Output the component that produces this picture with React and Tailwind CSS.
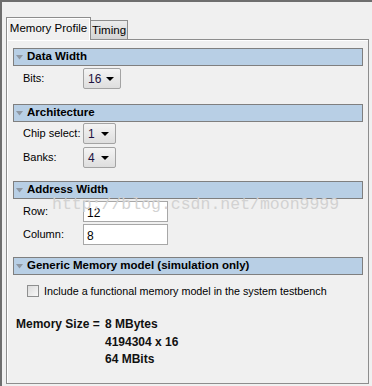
import React from "react";

const font = { fontFamily: '"Liberation Sans", Arial, sans-serif' };

function Header({ title }) {
  return (
    <div className="flex h-[18px] items-center border border-[#7f7f7f] bg-[#b8cfe5]">
      <svg width="7" height="5" viewBox="0 0 7 5" className="ml-[2px] mr-[4px]">
        <path d="M0 0 L7 0 L3.5 4.5 Z" fill="#8e97a2" />
      </svg>
      <span className="text-[11.5px] font-bold leading-none text-black">{title}</span>
    </div>
  );
}

function Dropdown({ value, width }) {
  return (
    <div
      className="flex h-[21px] items-center justify-between rounded-[2px] border border-[#a3a3a3] bg-gradient-to-b from-[#f4f4f4] to-[#dedede] pl-[4px] pr-[6px]"
      style={{ width }}
    >
      <span className="text-[12px] leading-none text-[#1c1240]">{value}</span>
      <svg width="8" height="4" viewBox="0 0 8 4">
        <path d="M0 0 L8 0 L4 4 Z" fill="#000" />
      </svg>
    </div>
  );
}

function Input({ value }) {
  return (
    <div className="flex h-[21px] w-[85px] items-end border border-[#a7a7a7] bg-white pb-[2px] pl-[3px]">
      <span className="text-[12px] leading-none text-black">{value}</span>
    </div>
  );
}

export default function App() {
  return (
    <div
      className="relative h-[386px] w-[372px] overflow-hidden border-l-2 border-t-2 border-[#6e6e6e] bg-[#f0f0f0] text-black"
      style={font}
    >
      <div className="ml-[4px] w-[363px]">
        {/* tabs */}
        <div className="mt-[15px] flex h-[22px] items-end">
          <div className="relative z-10 -mb-px flex h-[23px] w-[85px] items-center justify-center border border-b-0 border-[#8d8d8d] bg-[#f0f0f0] shadow-[inset_1px_1px_0_#ffffff,inset_-1px_0_0_#ffffff]">
            <span className="text-[11.5px] leading-none">Memory Profile</span>
          </div>
          <div className="flex h-[19px] w-[37px] items-center justify-center border border-b-0 border-l-0 border-[#8d8d8d] bg-gradient-to-b from-[#ececec] to-[#d4d4d4]">
            <span className="mt-[2px] text-[11.5px] leading-none">Timing</span>
          </div>
        </div>
        {/* panel */}
        <div className="h-[345px] border border-[#8d8d8d] bg-[#f0f0f0] pl-[6px] pr-[5px] pt-[8px] shadow-[inset_1px_1px_0_#ffffff]">
          <Header title="Data Width" />
          <div className="mt-[2px] flex items-center">
            <span className="ml-[10px] w-[60px] text-[11px] leading-none">Bits:</span>
            <Dropdown value="16" width={38} />
          </div>

          <div className="mt-[15px]">
            <Header title="Architecture" />
          </div>
          <div className="mt-[1px] flex items-center">
            <span className="ml-[10px] w-[60px] text-[11px] leading-none">Chip select:</span>
            <Dropdown value="1" width={33} />
          </div>
          <div className="mt-[3px] flex items-center">
            <span className="ml-[10px] w-[60px] text-[11px] leading-none">Banks:</span>
            <Dropdown value="4" width={33} />
          </div>

          <div className="mt-[13px]">
            <Header title="Address Width" />
          </div>
          <div className="mt-[2px] flex items-center">
            <span className="ml-[10px] w-[60px] text-[11px] leading-none">Row:</span>
            <Input value="12" />
          </div>
          <div className="mt-[2px] flex items-center">
            <span className="ml-[10px] w-[60px] text-[11px] leading-none">Column:</span>
            <Input value="8" />
          </div>

          <div className="mt-[12px]">
            <Header title="Generic Memory model (simulation only)" />
          </div>
          <div className="mt-[10px] flex items-center">
            <div className="ml-[14px] h-[12px] w-[12px] border border-[#8e8f8f] bg-gradient-to-br from-[#dcdcdc] to-[#f8f8f8]" />
            <span className="ml-[5px] text-[10.75px] leading-none">
              Include a functional memory model in the system testbench
            </span>
          </div>

          <div className="ml-[3px] mt-[19px] grid grid-cols-[89px_auto] text-[12px] font-bold leading-[17.5px] text-[#111]">
            <span>Memory Size =</span>
            <span>8 MBytes</span>
            <span />
            <span>4194304 x 16</span>
            <span />
            <span>64 MBits</span>
          </div>
        </div>
      </div>

      {/* watermark overlay */}
      <div
        className="pointer-events-none absolute left-[50px] top-[195px] whitespace-nowrap text-[16.5px] leading-none text-[#d2d2d2]"
        style={{ fontFamily: '"Liberation Mono", "Courier New", monospace' }}
      >
        http://blog.csdn.net/moon9999
      </div>
    </div>
  );
}
